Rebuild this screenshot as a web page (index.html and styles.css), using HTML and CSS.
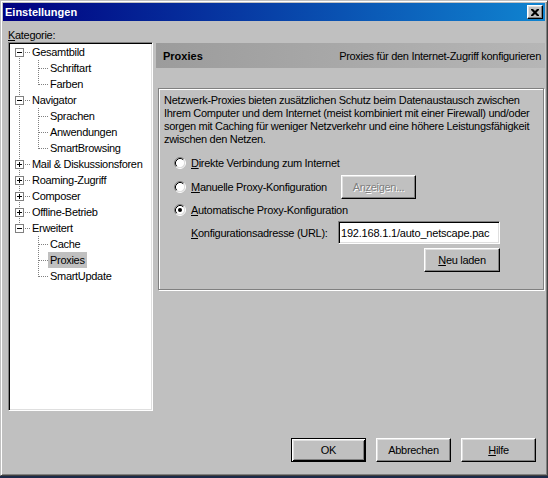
FILE: index.html
```html
<!DOCTYPE html>
<html>
<head>
<meta charset="utf-8">
<title>Einstellungen</title>
<link rel="stylesheet" href="styles.css">
</head>
<body>
<div class="window">
  <div class="titlebar">
    <span class="title">Einstellungen</span>
    <span class="close"><svg width="8" height="7" viewBox="0 0 8 7"><path d="M0 0h2l2 2 2-2h2v1L5.5 3.5 8 6v1H6L4 5 2 7H0V6l2.5-2.5L0 1z" fill="#000"/></svg></span>
  </div>
  <div class="content">
    <div class="cat-label"><u>K</u>ategorie:</div>
    <div class="cols">
      <div class="tree">
        <div class="row root first"><span class="g1"><svg class="exp" width="9" height="9" viewBox="0 0 9 9"><rect x="0.5" y="0.5" width="8" height="8" fill="#fff" stroke="#808080"/><path d="M2 4.5H7" stroke="#000"/></svg></span><span class="lbl">Gesamtbild</span></div>
        <div class="row"><span class="g1 v"></span><span class="g2"></span><span class="lbl">Schriftart</span></div>
        <div class="row"><span class="g1 v"></span><span class="g2 end"></span><span class="lbl">Farben</span></div>
        <div class="row root"><span class="g1"><svg class="exp" width="9" height="9" viewBox="0 0 9 9"><rect x="0.5" y="0.5" width="8" height="8" fill="#fff" stroke="#808080"/><path d="M2 4.5H7" stroke="#000"/></svg></span><span class="lbl">Navigator</span></div>
        <div class="row"><span class="g1 v"></span><span class="g2"></span><span class="lbl">Sprachen</span></div>
        <div class="row"><span class="g1 v"></span><span class="g2"></span><span class="lbl">Anwendungen</span></div>
        <div class="row"><span class="g1 v"></span><span class="g2 end"></span><span class="lbl">SmartBrowsing</span></div>
        <div class="row root"><span class="g1"><svg class="exp" width="9" height="9" viewBox="0 0 9 9"><rect x="0.5" y="0.5" width="8" height="8" fill="#fff" stroke="#808080"/><path d="M2 4.5H7M4.5 2V7" stroke="#000"/></svg></span><span class="lbl">Mail &amp; Diskussionsforen</span></div>
        <div class="row root"><span class="g1"><svg class="exp" width="9" height="9" viewBox="0 0 9 9"><rect x="0.5" y="0.5" width="8" height="8" fill="#fff" stroke="#808080"/><path d="M2 4.5H7M4.5 2V7" stroke="#000"/></svg></span><span class="lbl">Roaming-Zugriff</span></div>
        <div class="row root"><span class="g1"><svg class="exp" width="9" height="9" viewBox="0 0 9 9"><rect x="0.5" y="0.5" width="8" height="8" fill="#fff" stroke="#808080"/><path d="M2 4.5H7M4.5 2V7" stroke="#000"/></svg></span><span class="lbl">Composer</span></div>
        <div class="row root"><span class="g1"><svg class="exp" width="9" height="9" viewBox="0 0 9 9"><rect x="0.5" y="0.5" width="8" height="8" fill="#fff" stroke="#808080"/><path d="M2 4.5H7M4.5 2V7" stroke="#000"/></svg></span><span class="lbl">Offline-Betrieb</span></div>
        <div class="row root last"><span class="g1"><svg class="exp" width="9" height="9" viewBox="0 0 9 9"><rect x="0.5" y="0.5" width="8" height="8" fill="#fff" stroke="#808080"/><path d="M2 4.5H7" stroke="#000"/></svg></span><span class="lbl">Erweitert</span></div>
        <div class="row"><span class="g1"></span><span class="g2"></span><span class="lbl">Cache</span></div>
        <div class="row"><span class="g1"></span><span class="g2"></span><span class="lbl sel">Proxies</span></div>
        <div class="row"><span class="g1"></span><span class="g2 end"></span><span class="lbl">SmartUpdate</span></div>
      </div>
      <div class="panel">
        <div class="header"><b>Proxies</b><span>Proxies für den Internet-Zugriff konfigurieren</span></div>
        <div class="group">
          <p class="desc">Netzwerk-Proxies bieten zusätzlichen Schutz beim Datenaustausch zwischen<br>Ihrem Computer und dem Internet (meist kombiniert mit einer Firewall) und/oder<br>sorgen mit Caching für weniger Netzverkehr und eine höhere Leistungsfähigkeit<br>zwischen den Netzen.</p>
          <div class="opt first-opt">
            <svg class="radio" width="12" height="12" viewBox="0 0 12 12"><circle cx="6" cy="6" r="4.5" fill="#fff"/><path d="M2.11 9.89A5.5 5.5 0 0 1 9.89 2.11" fill="none" stroke="#808080"/><path d="M9.89 2.11A5.5 5.5 0 0 1 2.11 9.89" fill="none" stroke="#fff"/><path d="M2.82 9.18A4.5 4.5 0 0 1 9.18 2.82" fill="none" stroke="#000"/><path d="M9.18 2.82A4.5 4.5 0 0 1 2.82 9.18" fill="none" stroke="#dfdfdf"/></svg>
            <span class="opt-label"><u>D</u>irekte Verbindung zum Internet</span>
          </div>
          <div class="opt">
            <svg class="radio" width="12" height="12" viewBox="0 0 12 12"><circle cx="6" cy="6" r="4.5" fill="#fff"/><path d="M2.11 9.89A5.5 5.5 0 0 1 9.89 2.11" fill="none" stroke="#808080"/><path d="M9.89 2.11A5.5 5.5 0 0 1 2.11 9.89" fill="none" stroke="#fff"/><path d="M2.82 9.18A4.5 4.5 0 0 1 9.18 2.82" fill="none" stroke="#000"/><path d="M9.18 2.82A4.5 4.5 0 0 1 2.82 9.18" fill="none" stroke="#dfdfdf"/></svg>
            <span class="opt-label wide"><u>M</u>anuelle Proxy-Konfiguration</span>
            <span class="btn disabled">An<u>z</u>eigen...</span>
          </div>
          <div class="opt short">
            <svg class="radio" width="12" height="12" viewBox="0 0 12 12"><circle cx="6" cy="6" r="4.5" fill="#fff"/><path d="M2.11 9.89A5.5 5.5 0 0 1 9.89 2.11" fill="none" stroke="#808080"/><path d="M9.89 2.11A5.5 5.5 0 0 1 2.11 9.89" fill="none" stroke="#fff"/><path d="M2.82 9.18A4.5 4.5 0 0 1 9.18 2.82" fill="none" stroke="#000"/><path d="M9.18 2.82A4.5 4.5 0 0 1 2.82 9.18" fill="none" stroke="#dfdfdf"/><circle cx="6" cy="6" r="2" fill="#000"/></svg>
            <span class="opt-label"><u>A</u>utomatische Proxy-Konfiguration</span>
          </div>
          <div class="url-row">
            <span class="url-label"><u>K</u>onfigurationsadresse (URL):</span>
            <span class="input">192.168.1.1/auto_netscape.pac</span>
          </div>
          <div class="reload-row">
            <span class="btn reload"><u>N</u>eu laden</span>
          </div>
        </div>
      </div>
    </div>
    <div class="buttons">
      <span class="btn dlg default">OK</span>
      <span class="btn dlg">Abbrechen</span>
      <span class="btn dlg"><u>H</u>ilfe</span>
    </div>
  </div>
</div>
</body>
</html>
```
FILE: styles.css
```css
* { box-sizing: border-box; }
html, body { margin: 0; padding: 0; }
body {
  width: 548px;
  height: 478px;
  background: #1c2a48;
  font-family: "Liberation Sans", Arial, sans-serif;
  font-size: 11px;
  color: #000;
  overflow: hidden;
}
u { text-decoration: underline; text-underline-offset: 1px; }

.window {
  width: 548px;
  height: 476px;
  background: #c0c0c0;
  border: 1px solid;
  border-color: #c0c0c0 #404040 #404040 #c0c0c0;
  box-shadow: inset 1px 1px #fff, inset -1px -1px #808080;
  padding: 2px;
  display: flex;
  flex-direction: column;
}

.titlebar {
  height: 18px;
  background: linear-gradient(to right, #000080, #1084d0);
  display: flex;
  align-items: center;
  justify-content: space-between;
  padding: 0 2px 0 2px;
}
.title {
  color: #fff;
  font-weight: bold;
  font-size: 11px;
  line-height: 13px;
}
.close {
  width: 16px;
  height: 14px;
  background: #c0c0c0;
  border: 1px solid;
  border-color: #fff #000 #000 #fff;
  box-shadow: inset -1px -1px #808080, inset 1px 1px #dfdfdf;
  display: flex;
  align-items: center;
  justify-content: center;
}

.content {
  flex: 1;
  padding: 8px 0 0 5px;
  display: flex;
  flex-direction: column;
  letter-spacing: -0.3px;
}
.cat-label {
  height: 13px;
  line-height: 13px;
}
.cols {
  display: flex;
  height: 369px;
}

/* tree */
.tree {
  width: 145px;
  height: 369px;
  flex: none;
  background: #fff;
  border: 1px solid;
  border-color: #808080 #fff #fff #808080;
  box-shadow: inset 1px 1px #000, inset -1px -1px #dfdfdf;
  padding: 1px;
}
.row {
  height: 16px;
  display: flex;
  align-items: center;
}
.g1, .g2 {
  height: 16px;
  flex: none;
  background-repeat: no-repeat;
}
.g1 { width: 20px; display: flex; align-items: flex-start; }
.g2 { width: 18px; }
.exp { margin: 4px 0 0 5px; display: block; }

.root .g1 {
  background-image:
    repeating-linear-gradient(to bottom, #808080 0 1px, transparent 1px 2px),
    repeating-linear-gradient(to right, #808080 0 1px, transparent 1px 2px);
  background-size: 1px 16px, 6px 1px;
  background-position: 9px 0, 15px 8px;
}
.root.first .g1 {
  background-size: 1px 8px, 6px 1px;
  background-position: 9px 8px, 15px 8px;
}
.root.last .g1 {
  background-size: 1px 8px, 6px 1px;
  background-position: 9px 0, 15px 8px;
}
.g1.v {
  background-image: repeating-linear-gradient(to bottom, #808080 0 1px, transparent 1px 2px);
  background-size: 1px 16px;
  background-position: 9px 0;
}
.g2 {
  background-image:
    repeating-linear-gradient(to bottom, #808080 0 1px, transparent 1px 2px),
    repeating-linear-gradient(to right, #808080 0 1px, transparent 1px 2px);
  background-size: 1px 16px, 9px 1px;
  background-position: 8px 0, 9px 8px;
}
.g2.end {
  background-size: 1px 9px, 9px 1px;
  background-position: 8px 0, 9px 8px;
}
.lbl {
  padding: 1px 2px;
  line-height: 14px;
  white-space: nowrap;
}
.lbl.sel { background: #c0c0c0; }

/* right panel */
.panel {
  flex: 1;
  margin-left: 3px;
  display: flex;
  flex-direction: column;
}
.header {
  margin-top: 1px;
  height: 25px;
  background: linear-gradient(to right, #9c9c9c, #b6b6b6);
  display: flex;
  align-items: center;
  justify-content: space-between;
  padding: 0 4px 0 7px;
  white-space: nowrap;
}
.header b { font-weight: bold; letter-spacing: 0; }

.group {
  margin: 20px 1px 0 2px;
  height: 202px;
  border: 1px solid #808080;
  box-shadow: inset 1px 1px #fff, 1px 1px #fff;
  padding: 5px 0 0 5px;
}
.desc {
  margin: 0;
  line-height: 13px;
  white-space: nowrap;
}
.opt {
  height: 24px;
  display: flex;
  align-items: center;
  padding-left: 10px;
}
.opt.first-opt { margin-top: 5px; }
.opt.short { height: 22px; }
.radio { flex: none; display: block; }
.opt-label { margin-left: 5px; white-space: nowrap; }
.opt-label.wide { width: 150px; }

.url-row {
  height: 23px;
  display: flex;
  align-items: center;
  padding-left: 27px;
}
.url-label { width: 147px; white-space: nowrap; }
.input {
  width: 162px;
  height: 23px;
  background: #fff;
  border: 1px solid;
  border-color: #808080 #fff #fff #808080;
  box-shadow: inset 1px 1px #000, inset -1px -1px #dfdfdf;
  padding: 0 0 0 2px;
  display: flex;
  align-items: center;
  white-space: nowrap;
  overflow: hidden;
  letter-spacing: -0.2px;
}
.reload-row {
  margin-top: 4px;
  padding-left: 260px;
}

/* buttons */
.btn {
  display: inline-flex;
  align-items: center;
  justify-content: center;
  width: 75px;
  height: 24px;
  background: #c0c0c0;
  border: 1px solid;
  border-color: #fff #000 #000 #fff;
  box-shadow: inset -1px -1px #808080, inset 1px 1px #dfdfdf;
  white-space: nowrap;
  flex: none;
}
.btn.disabled {
  color: #808080;
  text-shadow: 1px 1px #fff;
}
.btn.reload { width: 76px; }
.btn.default {
  border-color: #000;
  box-shadow: inset 1px 1px #fff, inset -1px -1px #000, inset 2px 2px #dfdfdf, inset -2px -2px #808080;
}
.buttons {
  margin-top: 27px;
  display: flex;
  justify-content: flex-end;
  gap: 10px;
  padding-right: 9px;
}
```
